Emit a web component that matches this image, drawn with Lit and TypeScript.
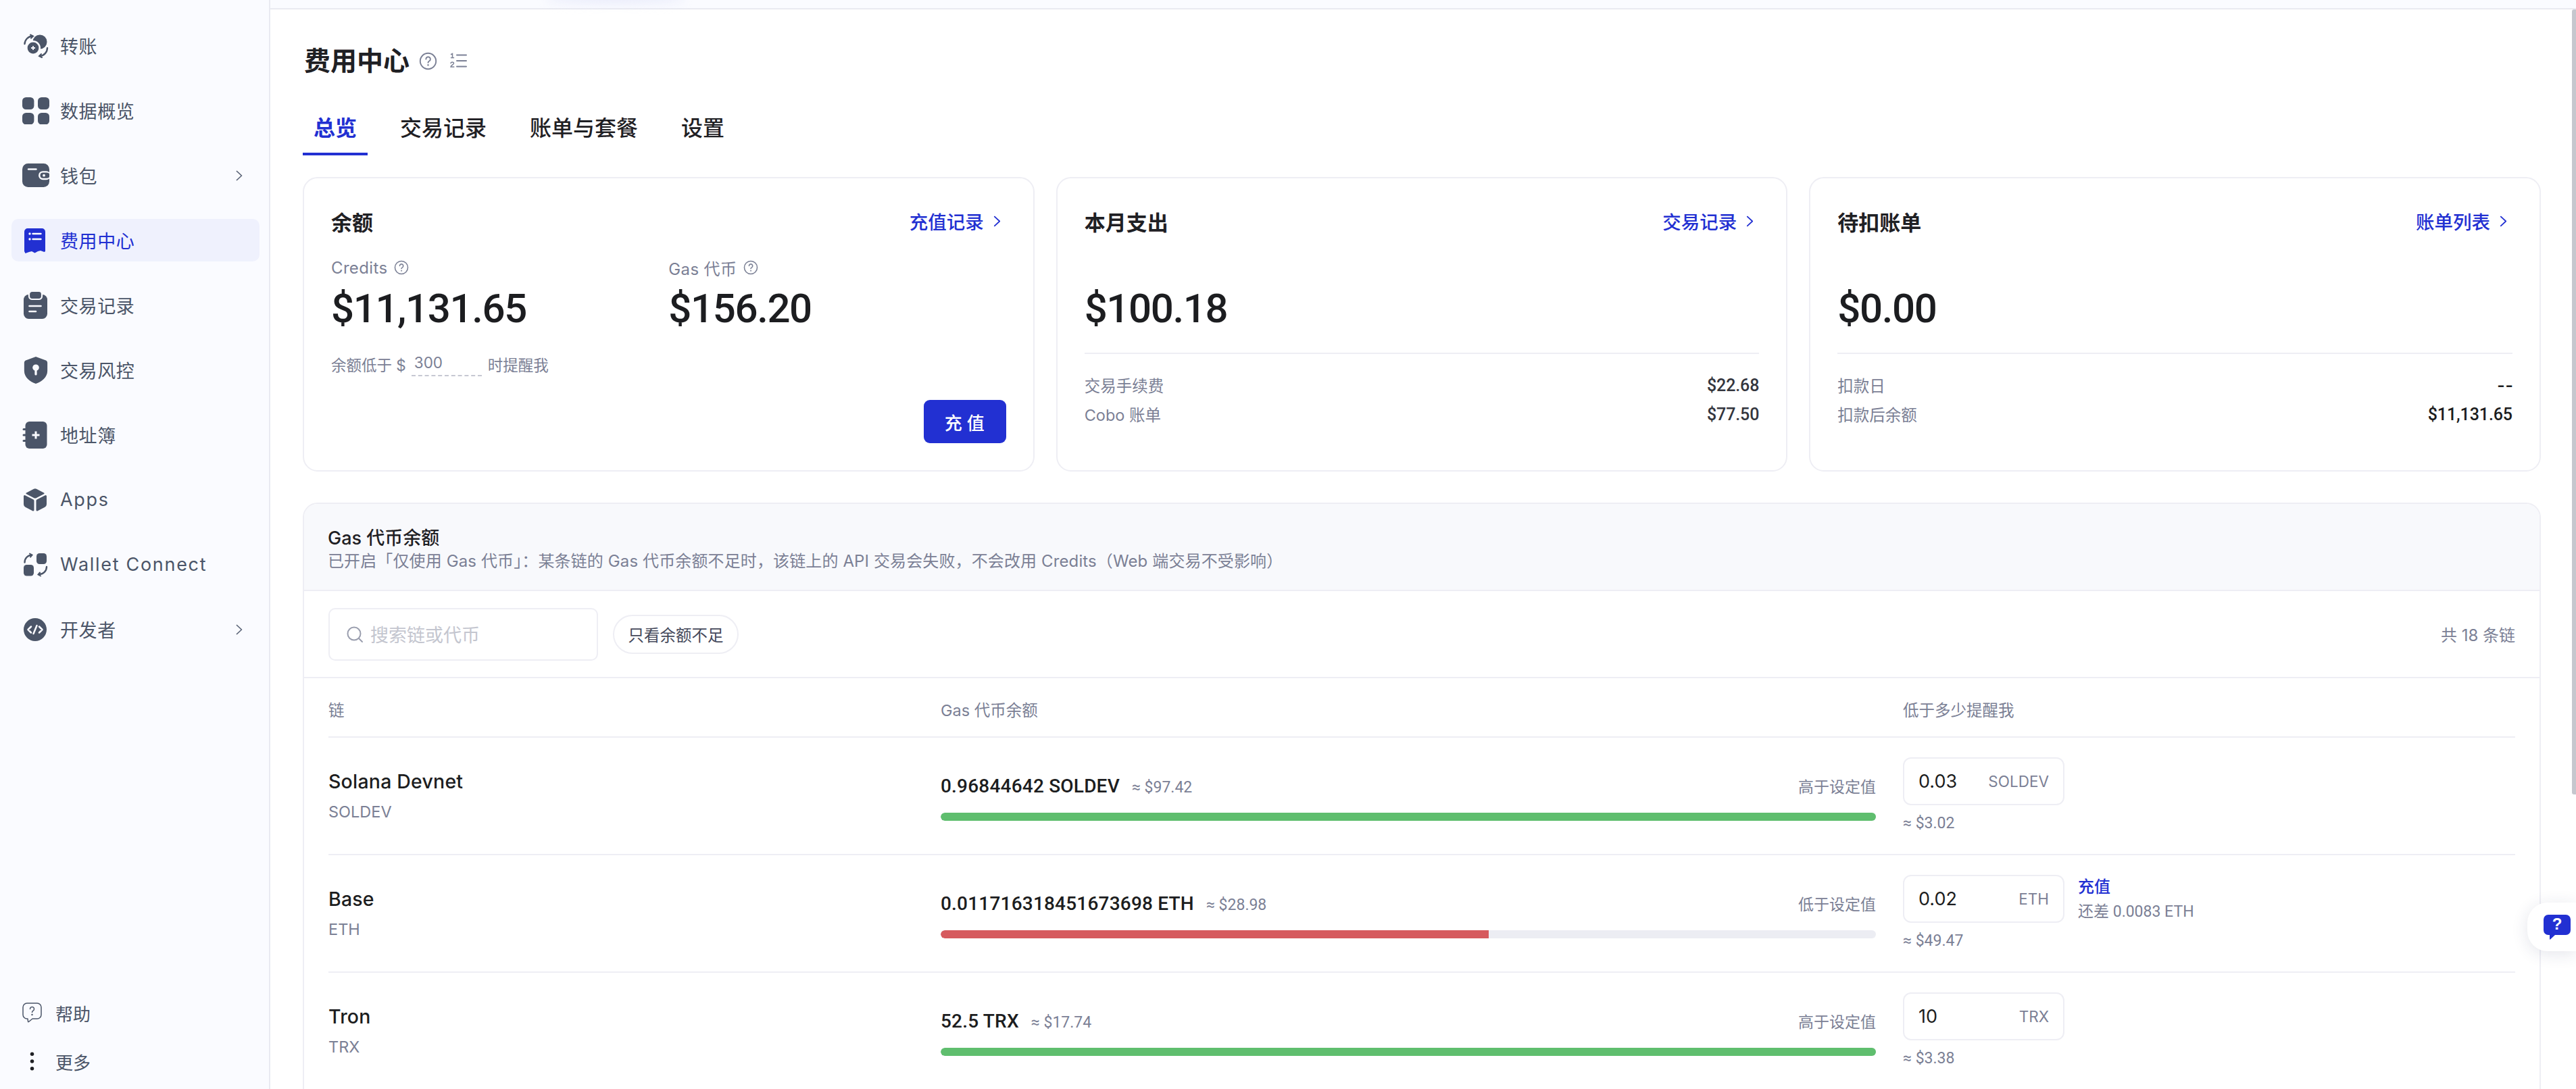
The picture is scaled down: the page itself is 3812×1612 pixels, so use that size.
import { LitElement, html, css, svg } from "lit";
import { customElement } from "lit/decorators.js";

const Q = (cls: string) => html`<svg class=${cls} viewBox="0 0 24 24" fill="none" stroke="currentColor" stroke-width="1.7" stroke-linecap="round"><circle cx="12" cy="12" r="10.4"/><path d="M9.2 9.3a2.9 2.9 0 1 1 4.4 2.5c-.9.5-1.6 1.1-1.6 2.2"/><circle cx="12" cy="17.2" r=".6" fill="currentColor" stroke-width="1"/></svg>`;
const CHEV = (cls: string) => html`<svg class=${cls} viewBox="0 0 10 16" fill="none" stroke="currentColor" stroke-width="1.7" stroke-linecap="round" stroke-linejoin="round"><path d="M1.5 1.5 8.5 8l-7 6.5"/></svg>`;

const navIcons: Record<string, any> = {
  transfer: svg`<svg class="ic" viewBox="0 0 40 40" fill="#4b5568"><g transform="translate(2 3)"><circle cx="24" cy="11" r="10.5"/><circle cx="14" cy="20" r="11" fill="#fafbff"/><circle cx="14" cy="20" r="8.4"/><path d="M14 17v6M11 20h6" stroke="#fafbff" stroke-width="1.8"/><path d="M1.5 14A12 12 0 0 1 13 2.5" fill="none" stroke="#4b5568" stroke-width="2.4" stroke-linecap="round"/><path d="M10 .5l4 2-3 3" fill="none" stroke="#4b5568" stroke-width="2" stroke-linecap="round"/><path d="M35 20A12 12 0 0 1 24 32" fill="none" stroke="#4b5568" stroke-width="2.4" stroke-linecap="round"/><path d="M27 34l-4-2 3-3" fill="none" stroke="#4b5568" stroke-width="2" stroke-linecap="round"/></g></svg>`,
  grid: svg`<svg class="ic" viewBox="0 0 40 40" fill="#4b5568"><rect x="0" y="0" width="17.4" height="18" rx="5.5"/><rect x="23" y="0" width="17" height="18" rx="5.5"/><rect x="0" y="23" width="17.4" height="17.4" rx="5.5"/><rect x="23" y="23" width="17" height="17.4" rx="5.5"/></svg>`,
  wallet: svg`<svg class="ic" viewBox="0 0 40 40"><g transform="translate(0 2)"><rect width="40" height="35" rx="8.5" fill="#4b5568"/><rect x="24" y="11.2" width="18" height="13" rx="6.5" fill="#fafbff"/><rect x="26.5" y="13.6" width="14" height="8.2" rx="4.1" fill="#4b5568"/><circle cx="32" cy="17.7" r="1.9" fill="#fafbff"/><path d="M9 8.5h11.5" stroke="#fafbff" stroke-width="2.4" stroke-linecap="round"/></g></svg>`,
  receipt: svg`<svg class="ic" viewBox="0 0 40 40"><g transform="translate(3 2)"><path fill="#2230d2" d="M5 0h21a5 5 0 0 1 5 5v29l-1.5 1-5.5-2-4 1-4.500 2.500-4.500-2.500-4 1-5.500 2L0 34V5a5 5 0 0 1 5-5z"/><circle cx="8" cy="8" r="1.700" fill="#fff"/><circle cx="8" cy="16" r="1.700" fill="#fff"/><path d="M12.500 8H24.500M12.500 16H24.500" stroke="#fff" stroke-width="2.400" stroke-linecap="round"/></g></svg>`,
  clip: svg`<svg class="ic" viewBox="0 0 40 40"><g transform="translate(2 0)"><rect y="4" width="35" height="36" rx="7.5" fill="#4b5568"/><rect x="8" y="-1" width="19" height="12" rx="4.5" fill="#4b5568" stroke="#fafbff" stroke-width="2.2"/><path d="M8.5 21H25.5M8.5 29H18" stroke="#fafbff" stroke-width="2.6" stroke-linecap="round"/></g></svg>`,
  shield: svg`<svg class="ic" viewBox="0 0 40 42"><g transform="translate(2 0)"><path fill="#4b5568" d="M18 0l15 5.500q3 1 3 4V22C36 32 27 39 18 42 9 39 0 32 0 22V9.500q0-3 3-4z"/><circle cx="18" cy="17" r="5" fill="#fafbff"/><rect x="16.300" y="19" width="3.400" height="10" rx="1.700" fill="#fafbff"/></g></svg>`,
  book: svg`<svg class="ic" viewBox="0 0 40 40"><g transform="translate(2 0)"><rect x="2.5" width="32" height="40" rx="6" fill="#4b5568"/><path d="M0 11.5h5M0 20h5M0 28.5h5" stroke="#4b5568" stroke-width="3" stroke-linecap="round"/><path d="M18 14.5v11M12.5 20h11" stroke="#fafbff" stroke-width="3"/></g></svg>`,
  cube: svg`<svg class="ic" viewBox="0 0 40 34"><g transform="translate(2 0)" fill="#4b5568"><path d="M15 .8a4 4 0 0 1 4 0l11 5.700a1 1 0 0 1 0 1.800L19 14a4 4 0 0 1-4 0L4 8.300a1 1 0 0 1 0-1.800z"/><path d="M0 11.500a1.500 1.500 0 0 1 2.200-1.300L14.500 16.600a2 2 0 0 1 1 1.700V32a1.500 1.500 0 0 1-2.200 1.300L2.700 27.800A5 5 0 0 1 0 23.500z"/><path d="M34 11.500a1.500 1.500 0 0 0-2.200-1.300L19.500 16.600a2 2 0 0 0-1 1.700V32a1.500 1.500 0 0 0 2.200 1.300l10.600-5.500a5 5 0 0 0 2.700-4.300z"/></g></svg>`,
  wc: svg`<svg class="ic" viewBox="0 0 40 34"><g transform="translate(2 0)"><rect x="19" width="15" height="16" rx="4.5" fill="#4b5568"/><rect y="17" width="15" height="16.500" rx="4.500" fill="#4b5568"/><path d="M1.500 13.500A11 11 0 0 1 11.500 2.500M34 20A11 11 0 0 1 23 31" fill="none" stroke="#4b5568" stroke-width="2.400" stroke-linecap="round"/><path d="M9 .5l3.500 2-2.500 3M25 33.500l-3.500-2 2.500-3" fill="none" stroke="#4b5568" stroke-width="2" stroke-linecap="round"/></g></svg>`,
  dev: svg`<svg class="ic" viewBox="0 0 40 34"><g transform="translate(2 0)"><circle cx="17" cy="17" r="17" fill="#4b5568"/><path d="M11 12.500 6.500 17l4.500 4.500M23 12.500l4.500 4.500-4.500 4.500M19.500 11l-5 12" fill="none" stroke="#fafbff" stroke-width="2.500" stroke-linecap="round" stroke-linejoin="round"/></g></svg>`,
};

const nav = [
  { l: "转账", i: "transfer" },
  { l: "数据概览", i: "grid" },
  { l: "钱包", i: "wallet", c: true },
  { l: "费用中心", i: "receipt", a: true },
  { l: "交易记录", i: "clip" },
  { l: "交易风控", i: "shield" },
  { l: "地址簿", i: "book" },
  { l: "Apps", i: "cube", w: true },
  { l: "Wallet Connect", i: "wc", w: true },
  { l: "开发者", i: "dev", c: true },
];

const rows = [
  { name: "Solana Devnet", sym: "SOLDEV", bal: "0.96844642 SOLDEV", usd: "≈ $97.42", st: "高于设定值", pct: 100, low: false, th: "0.03", thUsd: "≈ $3.02" },
  { name: "Base", sym: "ETH", bal: "0.011716318451673698 ETH", usd: "≈ $28.98", st: "低于设定值", pct: 58.6, low: true, th: "0.02", thUsd: "≈ $49.47" },
  { name: "Tron", sym: "TRX", bal: "52.5 TRX", usd: "≈ $17.74", st: "高于设定值", pct: 100, low: false, th: "10", thUsd: "≈ $3.38" },
];

@customElement("app-root")
export class AppRoot extends LitElement {
  static styles = css`
    :host { display: flex; width: 3812px; height: 1612px; overflow: hidden; background: #fafbff; position: relative;
      font-family: "Inter", "Noto Sans CJK SC", sans-serif; color: #1f2024; }
    * { box-sizing: border-box; }
    .side { width: 400px; flex: none; height: 100%; border-right: 2px solid #e9eaf1; display: flex; flex-direction: column; padding: 36px 14px 23px 17px; color: #4b5568; }
    .nav { display: flex; flex-direction: column; gap: 33px; }
    .item { height: 63px; display: flex; align-items: center; padding: 0 25px 0 16px; gap: 16px; border-radius: 10px; font-size: 27px; }
    .item.on { background: #eff1fd; color: #2230d2; }
    .ic { width: 40px; height: 40px; flex: none; }
    .item .txt { flex: 1; letter-spacing: .6px; white-space: nowrap; }
    .item .txt.wide { letter-spacing: 1.7px; }
    .chev { width: 10px; height: 16px; color: #5b6478; }
    .spacer { flex: 1; }
    .foot { display: flex; flex-direction: column; gap: 36px; padding-left: 16px; }
    .fitem { height: 36px; display: flex; align-items: center; gap: 20px; font-size: 26px; }
    .fitem svg { width: 29px; height: 30px; flex: none; }
    .main { flex: 1; min-width: 0; height: 1600px; margin-top: 12px; background: #fff; border-top: 2px solid #e9eaf1; padding: 0 52px 0 48px; overflow: hidden; }
    .head { padding-top: 38px; height: 114px; display: flex; align-items: center; gap: 14px; }
    h1 { margin: 0 0 0 2px; font-size: 39px; line-height: 76px; font-weight: 600; }
    .hq { width: 27px; height: 27px; color: #7b8095; }
    .hl { width: 26px; height: 26px; color: #7b8095; margin-left: 4px; }
    .tabs { display: flex; gap: 32px; margin-top: 24px; height: 78px; }
    .tab { padding: 0 16px; font-size: 32px; font-weight: 500; line-height: 76px; height: 78px; border-bottom: 4px solid transparent; }
    .tab.on { color: #2230d2; font-weight: 700; border-bottom-color: #2230d2; }
    .cards { display: grid; grid-template-columns: repeat(3, minmax(0, 1fr)); gap: 32px; margin-top: 32px; }
    .card { height: 436px; border: 2px solid #eeeef4; border-radius: 22px; padding: 0 40px; position: relative; display: flex; flex-direction: column; }
    .ctop { display: flex; justify-content: space-between; align-items: center; height: 40px; margin-top: 43px; }
    .ctitle { font-size: 31px; font-weight: 600; }
    .link { color: #2230d2; font-size: 27.5px; font-weight: 500; display: flex; align-items: center; gap: 14px; }
    .link .chev { color: #2230d2; width: 11px; height: 17px; margin-right: 8px; }
    .bal2 { display: flex; margin-top: 33px; }
    .bcol { width: 515px; }
    .lab { font-size: 24px; color: #7b8095; display: flex; align-items: center; gap: 10px; height: 32px; letter-spacing: .35px; }
    .lab svg { width: 22px; height: 22px; }
    .num { font-family: "Roboto", sans-serif; font-weight: 500; font-size: 60px; line-height: 68px; letter-spacing: -1.4px; margin-top: 11px; color: #1c1d20; }
    .num.solo { margin-top: 76px; }
    .warn { display: flex; align-items: center; font-size: 22.5px; color: #7b8095; margin-top: 30px; height: 36px; }
    .warn .inp { width: 104px; margin: 0 9px 0 8px; padding-left: 4px; border-bottom: 2px dashed #c6c8d2; height: 36px; line-height: 32px; }
    .btn { position: absolute; right: 40px; bottom: 40px; width: 122px; height: 64px; border-radius: 9px; background: #2230d2; color: #fff; font-size: 26px; font-weight: 500; display: flex; align-items: center; justify-content: center; letter-spacing: 7px; padding-left: 6px; }
    .divider { height: 2px; background: #eeeef4; margin-top: 31px; }
    .kv { display: flex; justify-content: space-between; align-items: center; height: 30px; font-size: 23.5px; color: #7b8095; }
    .kv.first { margin-top: 31px; }
    .kv + .kv { margin-top: 13px; }
    .kv b { font-family: "Roboto", sans-serif; font-weight: 500; font-size: 25px; color: #34363e; letter-spacing: -.1px; }
    .kv b.dark { color: #1c1d20; }
    .kv b.dash { font-size: 34px; font-weight: 400; letter-spacing: 3px; margin-right: -3px; }
    .panel { margin-top: 46px; border: 2px solid #eeeef4; border-radius: 22px 22px 0 0; }
    .phead { height: 129px; background: #f8f9fc; border-radius: 20px 20px 0 0; border-bottom: 2px solid #eeeef4; padding: 33px 35px 0; }
    .ptitle { font-size: 27px; font-weight: 500; line-height: 36px; }
    .psub { font-size: 24px; line-height: 34px; color: #7b8095; margin-top: -1px; white-space: nowrap; letter-spacing: .12px; }
    .tools { height: 129px; border-bottom: 2px solid #eeeef4; padding: 0 36px; display: flex; align-items: center; gap: 22px; }
    .search { width: 399px; height: 78px; border: 2px solid #eeeef4; border-radius: 10px; display: flex; align-items: center; padding-left: 24px; gap: 10px; color: #c4c6cf; font-size: 27px; }
    .search svg { width: 26px; height: 26px; color: #9a9eae; }
    .pill { width: 186px; height: 58px; border: 2px solid #eeeef4; border-radius: 29px; display: flex; align-items: center; justify-content: center; font-size: 23.5px; color: #44485a; }
    .total { margin-left: auto; font-size: 24px; color: #7b8095; }
    .thead, .row { display: grid; grid-template-columns: 866px 1384px 1fr; column-gap: 40px; margin: 0 36px; border-bottom: 2px solid #eeeef4; }
    .thead { height: 88px; align-items: center; font-size: 23.5px; color: #7b8095; padding-top: 6px; }
    .row { height: 174px; }
    .name { font-size: 28.5px; font-weight: 500; line-height: 40px; padding-top: 45px; color: #1c1d20; letter-spacing: .2px; }
    .sym { font-size: 23.5px; line-height: 32px; color: #7b8095; margin-top: 9px; }
    .bline { display: flex; align-items: baseline; padding-top: 54px; height: 90px; gap: 18px; white-space: nowrap; }
    .amt { font-family: "Roboto", sans-serif; font-weight: 500; font-size: 28px; line-height: 36px; color: #1c1d20; letter-spacing: .2px; }
    .usd { font-family: "Roboto", sans-serif; font-size: 23px; color: #7b8095; }
    .st { margin-left: auto; font-size: 23px; color: #7b8095; }
    .track { height: 12px; border-radius: 6px; background: #ecedf3; margin-top: 21px; overflow: hidden; }
    .fill { height: 100%; border-radius: 6px 0 0 6px; background: #5fbe6e; }
    .fill.low { background: #d65a5e; }
    .thc { padding-top: 29px; display: flex; gap: 20px; align-items: flex-start; }
    .inbox { width: 239px; height: 71px; border: 2px solid #eeeef4; border-radius: 12px; display: flex; align-items: center; justify-content: space-between; padding: 0 21px; }
    .inv { font-size: 27px; font-weight: 400; color: #1c1d20; }
    .inu { font-size: 22.5px; color: #7b8095; }
    .thusd { font-size: 23px; line-height: 30px; color: #7b8095; margin-top: 12px; font-family: "Roboto", sans-serif; }
    .rech { padding-top: 3px; }
    .rlink { color: #2230d2; font-size: 24px; font-weight: 500; line-height: 30px; }
    .rmis { color: #7b8095; font-size: 23px; line-height: 30px; margin-top: 7px; white-space: nowrap; font-family: "Roboto", "Noto Sans CJK SC", sans-serif; }
    .scroll { position: absolute; right: 0; top: 14px; width: 6px; height: 1162px; background: #c6c7ce; border-radius: 3px 0 0 3px; }
    .glow { position: absolute; left: 808px; top: -10px; width: 205px; height: 14px; border-radius: 50%; background: #e6e9fa; filter: blur(8px); }
    .float { position: absolute; right: 0; top: 1336px; width: 72px; height: 72px; background: #fff; border-radius: 30px 0 0 30px; box-shadow: 0 4px 24px rgba(30, 40, 90, .12); display: flex; align-items: center; padding-left: 24px; }
    .float .bub { width: 40px; height: 37px; position: relative; }
    .float svg { width: 40px; height: 37px; display: block; }
    .float span { position: absolute; left: 0; right: 0; top: 0; text-align: center; color: #fff; font-size: 24px; line-height: 28px; font-weight: 700; font-family: "Liberation Sans", sans-serif; }
  `;

  private card(title: string, link: string, val: string, a: string, av: string, b: string, bv: string, dark = false) {
    return html`<div class="card">
      <div class="ctop"><div class="ctitle">${title}</div><div class="link">${link}${CHEV("chev")}</div></div>
      <div class="num solo">${val}</div>
      <div class="divider"></div>
      <div class="kv first"><span>${a}</span><b class=${av === "--" ? "dash dark" : ""}>${av}</b></div>
      <div class="kv"><span>${b}</span><b class=${dark ? "dark" : ""}>${bv}</b></div>
    </div>`;
  }

  render() {
    return html`
      <aside class="side">
        <nav class="nav">
          ${nav.map(
            (n) => html`<div class="item ${n.a ? "on" : ""}">${navIcons[n.i]}<span class="txt ${n.w ? "wide" : ""}">${n.l}</span>${n.c ? CHEV("chev") : ""}</div>`
          )}
        </nav>
        <div class="spacer"></div>
        <div class="foot">
          <div class="fitem"><svg viewBox="0 0 29 30" fill="none" stroke="#4b5568" stroke-width="1.5" stroke-linejoin="round"><path d="M7 1h15a6 6 0 0 1 6 6v11a6 6 0 0 1-6 6H15l-5.500 4.500c-.6.400-1 .100-1-.5L8 24H7a6 6 0 0 1-6-6V7a6 6 0 0 1 6-6z"/><path d="M11.500 9.500a3 3 0 1 1 4.500 2.600c-1 .6-1.500 1.200-1.500 2.400" stroke-linecap="round"/><circle cx="14.500" cy="18" r=".5" fill="#4b5568"/></svg><span>帮助</span></div>
          <div class="fitem"><svg viewBox="0 0 29 36" fill="#1f2024"><circle cx="14.500" cy="5" r="3.300"/><circle cx="14.500" cy="18" r="3.300"/><circle cx="14.500" cy="31" r="3.300"/></svg><span>更多</span></div>
        </div>
      </aside>
      <main class="main">
        <div class="head">
          <h1>费用中心</h1>
          ${Q("hq")}
          <svg class="hl" viewBox="0 0 26 26" fill="none" stroke="currentColor" stroke-width="2" stroke-linecap="round"><path d="M11 4.500h14M11 13h14M11 21.500h14"/><path d="M2.500 3.500 4.500 2.500v6M2.500 8.500h4" stroke-width="1.500"/><path d="M2 16.500c.5-2 4.500-2 4.500.3 0 1.700-4.500 3.200-4.500 5.200h4.800" stroke-width="1.500"/></svg>
        </div>
        <div class="tabs">
          <div class="tab on">总览</div><div class="tab">交易记录</div><div class="tab">账单与套餐</div><div class="tab">设置</div>
        </div>
        <section class="cards">
          <div class="card">
            <div class="ctop"><div class="ctitle">余额</div><div class="link">充值记录${CHEV("chev")}</div></div>
            <div class="bal2">
              <div class="bcol"><div class="lab">Credits ${Q("")}</div><div class="num">$11,131.65</div></div>
              <div class="bcol"><div class="lab">Gas 代币 ${Q("")}</div><div class="num">$156.20</div></div>
            </div>
            <div class="warn">余额低于 $<span class="inp">300</span>时提醒我</div>
            <div class="btn">充值</div>
          </div>
          ${this.card("本月支出", "交易记录", "$100.18", "交易手续费", "$22.68", "Cobo 账单", "$77.50")}
          ${this.card("待扣账单", "账单列表", "$0.00", "扣款日", "--", "扣款后余额", "$11,131.65", true)}
        </section>
        <section class="panel">
          <div class="phead">
            <div class="ptitle">Gas 代币余额</div>
            <div class="psub">已开启「仅使用 Gas 代币」：某条链的 Gas 代币余额不足时，该链上的 API 交易会失败，不会改用 Credits（Web 端交易不受影响）</div>
          </div>
          <div class="tools">
            <div class="search"><svg viewBox="0 0 26 26" fill="none" stroke="currentColor" stroke-width="2" stroke-linecap="round"><circle cx="12" cy="12" r="9.500"/><path d="m19 19 5 5"/></svg>搜索链或代币</div>
            <div class="pill">只看余额不足</div>
            <div class="total">共 18 条链</div>
          </div>
          <div class="thead"><div>链</div><div>Gas 代币余额</div><div>低于多少提醒我</div></div>
          ${rows.map(
            (r) => html`<div class="row">
              <div><div class="name">${r.name}</div><div class="sym">${r.sym}</div></div>
              <div>
                <div class="bline"><span class="amt">${r.bal}</span><span class="usd">${r.usd}</span><span class="st">${r.st}</span></div>
                <div class="track"><div class="fill ${r.low ? "low" : ""}" style="width:${r.pct}%"></div></div>
              </div>
              <div class="thc">
                <div>
                  <div class="inbox"><span class="inv">${r.th}</span><span class="inu">${r.sym}</span></div>
                  <div class="thusd">${r.thUsd}</div>
                </div>
                ${r.low ? html`<div class="rech"><div class="rlink">充值</div><div class="rmis">还差 0.0083 ETH</div></div>` : ""}
              </div>
            </div>`
          )}
        </section>
      </main>
      <div class="glow"></div>
      <div class="scroll"></div>
      <div class="float"><div class="bub"><svg viewBox="0 0 40 37"><path fill="#2230d2" d="M7 0h26a7 7 0 0 1 7 7v16a7 7 0 0 1-7 7H17l-7 6.500c-.5.400-1 .100-1-.5V30H7a7 7 0 0 1-7-7V7a7 7 0 0 1 7-7z"/></svg><span>?</span></div></div>
    `;
  }
}
